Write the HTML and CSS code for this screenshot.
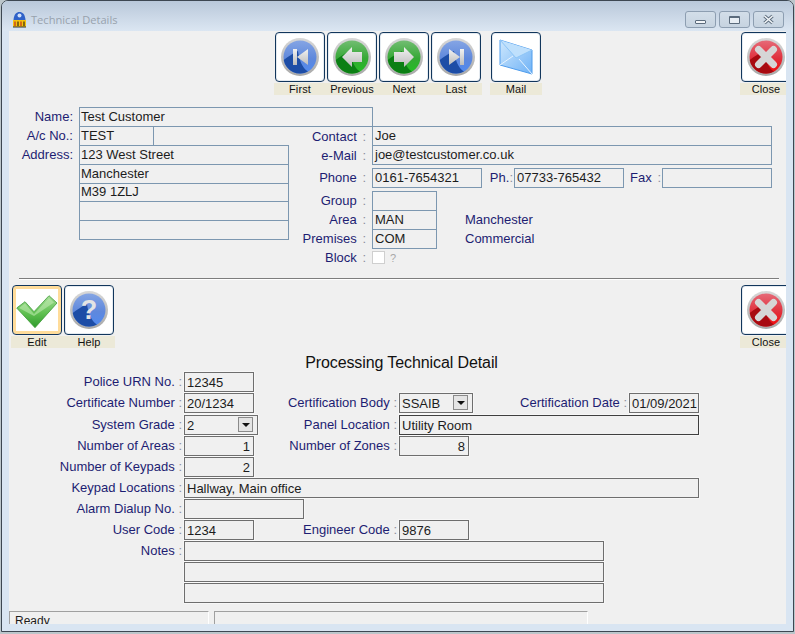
FILE: index.html
```html
<!DOCTYPE html>
<html lang="en">
<head>
    <meta charset="UTF-8">
    <meta name="viewport" content="width=device-width, initial-scale=1.0">
    <title>Technical Details</title>
    <link rel="stylesheet" href="styles.css">
</head>
<body>

    <!-- Shared gradients and icon parts -->
    <svg class="icon-defs" aria-hidden="true">
        <defs>
            <linearGradient id="ring" x1="0" y1="0" x2="0" y2="1">
                <stop offset="0" stop-color="#d8d8d8"/>
                <stop offset="1" stop-color="#a8a8a8"/>
            </linearGradient>
            <linearGradient id="glyph" x1="0" y1="0" x2="0" y2="1">
                <stop offset="0" stop-color="#f2f2f2"/>
                <stop offset="1" stop-color="#bcbcbc"/>
            </linearGradient>
            <linearGradient id="blueTop" x1="0" y1="0" x2="0" y2="1">
                <stop offset="0" stop-color="#85a5e4"/>
                <stop offset="0.55" stop-color="#5f88dc"/>
                <stop offset="1" stop-color="#4f8af2"/>
            </linearGradient>
            <linearGradient id="greenTop" x1="0" y1="0" x2="0" y2="1">
                <stop offset="0" stop-color="#72bd72"/>
                <stop offset="0.55" stop-color="#35a835"/>
                <stop offset="1" stop-color="#22c022"/>
            </linearGradient>
            <linearGradient id="redTop" x1="0" y1="0" x2="0" y2="1">
                <stop offset="0" stop-color="#e66a78"/>
                <stop offset="0.55" stop-color="#e0303c"/>
                <stop offset="1" stop-color="#f40808"/>
            </linearGradient>
            <linearGradient id="envelope" x1="0" y1="0" x2="1" y2="1">
                <stop offset="0" stop-color="#cfe8fd"/>
                <stop offset="1" stop-color="#6fb2f6"/>
            </linearGradient>
            <linearGradient id="tick" x1="0" y1="0" x2="0" y2="1">
                <stop offset="0" stop-color="#a4dc94"/>
                <stop offset="0.55" stop-color="#5fc050"/>
                <stop offset="1" stop-color="#2f9a2c"/>
            </linearGradient>
            <path id="swoosh" d="M8.7 28C13 25 18 21 23 19C24 27 27 36 33 39.5A16.5 16.5 0 0 1 8.7 28Z"/>
            <symbol id="disc-blue" viewBox="0 0 50 50">
                <circle cx="25" cy="25" r="19" fill="url(#ring)"/>
                <circle cx="25" cy="25" r="16.5" fill="url(#blueTop)"/>
                <use href="#swoosh" fill="#1d4da6"/>
            </symbol>
            <symbol id="disc-green" viewBox="0 0 50 50">
                <circle cx="25" cy="25" r="19" fill="url(#ring)"/>
                <circle cx="25" cy="25" r="16.5" fill="url(#greenTop)"/>
                <use href="#swoosh" fill="#0b7f14"/>
            </symbol>
            <symbol id="disc-red" viewBox="0 0 50 50">
                <circle cx="25" cy="25" r="19" fill="url(#ring)"/>
                <circle cx="25" cy="25" r="16.5" fill="url(#redTop)"/>
                <use href="#swoosh" fill="#a80a10"/>
            </symbol>
            <symbol id="icon-close" viewBox="0 0 50 50">
                <use href="#disc-red" width="50" height="50"/>
                <path d="M17.5 17.5L32.5 32.5M32.5 17.5L17.5 32.5" stroke="#d6d6d6" stroke-width="7" stroke-linecap="round"/>
            </symbol>
        </defs>
    </svg>

    <div class="window">

        <div class="titlebar">
            <svg class="app-icon" viewBox="0 0 15 17">
                <path d="M1.5 9C2 3 4.5 1 7.5 1S13 3 13.5 9Z" fill="#2f62c8"/>
                <circle cx="7.5" cy="4.5" r="2" fill="#cfe0fb"/>
                <rect x="1" y="9" width="13" height="7" fill="#f4c20d"/>
                <path d="M3 10.5V15M9 10.5V15" stroke="#c0301c" stroke-width="1.2"/>
                <path d="M6 10.5V15M12 10.5V15" stroke="#3a2a10" stroke-width="1.2"/>
                <path d="M1 16H14" stroke="#333"/>
            </svg>
            <span class="title-text">Technical Details</span>
            <div class="win-controls">
                <div class="win-btn"><span class="glyph-min"></span></div>
                <div class="win-btn"><span class="glyph-max"></span></div>
                <div class="win-btn">
                    <svg width="13" height="11" viewBox="0 0 13 11">
                        <path d="M2.5 2L10.5 9M10.5 2L2.5 9" stroke="#5b6b7c" stroke-width="3.4"/>
                        <path d="M2.5 2L10.5 9M10.5 2L2.5 9" stroke="#f2f5f8" stroke-width="1.6"/>
                    </svg>
                </div>
            </div>
        </div>

        <div class="client">

            <!-- Record navigation -->
            <div class="toolbar toolbar-top">
                <div class="tool">
                    <div class="tool-btn">
                        <svg viewBox="0 0 50 50">
                            <use href="#disc-blue" width="50" height="50"/>
                            <path d="M18 17H22V33H18ZM33 17V33L22 25Z" fill="url(#glyph)"/>
                        </svg>
                    </div>
                    <div class="tool-label">First</div>
                </div>
                <div class="tool">
                    <div class="tool-btn">
                        <svg viewBox="0 0 50 50">
                            <use href="#disc-green" width="50" height="50"/>
                            <path d="M15 25L25 15V20H35V30H25V35Z" fill="url(#glyph)"/>
                        </svg>
                    </div>
                    <div class="tool-label">Previous</div>
                </div>
                <div class="tool">
                    <div class="tool-btn">
                        <svg viewBox="0 0 50 50">
                            <use href="#disc-green" width="50" height="50"/>
                            <path d="M35 25L25 15V20H15V30H25V35Z" fill="url(#glyph)"/>
                        </svg>
                    </div>
                    <div class="tool-label">Next</div>
                </div>
                <div class="tool">
                    <div class="tool-btn">
                        <svg viewBox="0 0 50 50">
                            <use href="#disc-blue" width="50" height="50"/>
                            <path d="M29 17H33V33H29ZM18 17V33L29 25Z" fill="url(#glyph)"/>
                        </svg>
                    </div>
                    <div class="tool-label">Last</div>
                </div>
                <div class="tool tool-mail">
                    <div class="tool-btn">
                        <svg viewBox="0 0 50 50">
                            <path d="M9 8L41 18V42L9 33Z" fill="url(#envelope)" stroke="#4f9cec"/>
                            <path d="M9 8L25 26L41 18" fill="#bfe0fc" stroke="#8cc4f6"/>
                            <path d="M9 33L22 24M41 42L28 27" stroke="#e6f3fe" fill="none"/>
                        </svg>
                    </div>
                    <div class="tool-label">Mail</div>
                </div>
                <div class="tool tool-close-top">
                    <div class="tool-btn">
                        <svg viewBox="0 0 50 50"><use href="#icon-close" width="50" height="50"/></svg>
                    </div>
                    <div class="tool-label">Close</div>
                </div>
            </div>

            <!-- Customer details -->
            <div class="customer">
                <div class="c-row">
                    <div class="c-label">Name:</div>
                    <div class="fld fld-left w-name">Test Customer</div>
                </div>
                <div class="customer-body">
                    <div class="customer-left">
                        <div class="c-row">
                            <div class="c-label">A/c No.:</div>
                            <div class="fld fld-left w-acc">TEST</div>
                        </div>
                        <div class="c-row">
                            <div class="c-label">Address:</div>
                            <div class="fld fld-left w-addr">123 West Street</div>
                        </div>
                        <div class="c-row">
                            <div class="c-label"></div>
                            <div class="fld fld-left w-addr">Manchester</div>
                        </div>
                        <div class="c-row c-row-short">
                            <div class="c-label"></div>
                            <div class="fld fld-left w-addr">M39 1ZLJ</div>
                        </div>
                        <div class="c-row">
                            <div class="c-label"></div>
                            <div class="fld fld-left w-addr"></div>
                        </div>
                        <div class="c-row">
                            <div class="c-label"></div>
                            <div class="fld fld-left w-addr"></div>
                        </div>
                    </div>
                    <div class="customer-right">
                        <div class="c-row">
                            <div class="r-label r-label-low">Contact <span class="colon">:</span></div>
                            <div class="fld w-wide">Joe</div>
                        </div>
                        <div class="c-row">
                            <div class="r-label r-label-low">e-Mail <span class="colon">:</span></div>
                            <div class="fld w-wide">joe@testcustomer.co.uk</div>
                        </div>
                        <div class="c-row phone-row">
                            <div class="r-label">Phone <span class="colon">:</span></div>
                            <div class="fld w-phone">0161-7654321</div>
                            <div class="ph-label">Ph.<span class="colon">:</span></div>
                            <div class="fld w-phone">07733-765432</div>
                            <div class="fax-label">Fax <span class="colon">:</span></div>
                            <div class="fld w-phone"></div>
                        </div>
                        <div class="c-row group-row">
                            <div class="r-label">Group <span class="colon">:</span></div>
                            <div class="fld w-code"></div>
                        </div>
                        <div class="c-row">
                            <div class="r-label">Area <span class="colon">:</span></div>
                            <div class="fld w-code">MAN</div>
                            <div class="lookup">Manchester</div>
                        </div>
                        <div class="c-row">
                            <div class="r-label">Premises <span class="colon">:</span></div>
                            <div class="fld w-code">COM</div>
                            <div class="lookup">Commercial</div>
                        </div>
                        <div class="c-row">
                            <div class="r-label">Block <span class="colon">:</span></div>
                            <div class="check"></div>
                            <div class="check-mark">?</div>
                        </div>
                    </div>
                </div>
            </div>

            <div class="divider"></div>

            <div class="toolbar toolbar-edit">
                <div class="tool">
                    <div class="tool-btn tool-btn-focus">
                        <svg viewBox="0 0 50 50">
                            <path d="M4.7 23L13 16.7L22 26.7L37 10.7L45 18L23 42.7Z" fill="url(#tick)" stroke="#3f9c38" stroke-width="0.8"/>
                            <path d="M7 23L13 18.5L22 29L37 13L42 17.5L22 31Z" fill="#c2ecb4" opacity="0.55"/>
                        </svg>
                    </div>
                    <div class="tool-label">Edit</div>
                </div>
                <div class="tool">
                    <div class="tool-btn">
                        <svg viewBox="0 0 50 50">
                            <use href="#disc-blue" width="50" height="50"/>
                            <text class="help-mark" x="25" y="34" text-anchor="middle">?</text>
                        </svg>
                    </div>
                    <div class="tool-label">Help</div>
                </div>
                <div class="tool tool-close-edit">
                    <div class="tool-btn">
                        <svg viewBox="0 0 50 50"><use href="#icon-close" width="50" height="50"/></svg>
                    </div>
                    <div class="tool-label">Close</div>
                </div>
            </div>

            <h2 class="section-title">Processing Technical Detail</h2>

            <!-- Technical detail form -->
            <div class="tech-form">
                <div class="t-row">
                    <div class="t-label">Police URN No. <span class="colon">:</span></div>
                    <div class="box w-70">12345</div>
                </div>
                <div class="t-row">
                    <div class="t-label">Certificate Number <span class="colon">:</span></div>
                    <div class="box w-70">20/1234</div>
                    <div class="t-label w-gap">Certification Body <span class="colon">:</span></div>
                    <div class="box select w-74">SSAIB<span class="drop"></span></div>
                    <div class="t-label w-date">Certification Date <span class="colon">:</span></div>
                    <div class="box w-70">01/09/2021</div>
                </div>
                <div class="t-row row-grade">
                    <div class="t-label">System Grade <span class="colon">:</span></div>
                    <div class="box select w-74">2<span class="drop"></span></div>
                    <div class="t-label w-gap-short">Panel Location <span class="colon">:</span></div>
                    <div class="box box-dark w-300">Utility Room</div>
                </div>
                <div class="t-row">
                    <div class="t-label">Number of Areas <span class="colon">:</span></div>
                    <div class="box num w-70">1</div>
                    <div class="t-label w-gap">Number of Zones <span class="colon">:</span></div>
                    <div class="box num w-70">8</div>
                </div>
                <div class="t-row">
                    <div class="t-label">Number of Keypads <span class="colon">:</span></div>
                    <div class="box num w-70">2</div>
                </div>
                <div class="t-row">
                    <div class="t-label">Keypad Locations <span class="colon">:</span></div>
                    <div class="box w-515">Hallway, Main office</div>
                </div>
                <div class="t-row">
                    <div class="t-label">Alarm Dialup No. <span class="colon">:</span></div>
                    <div class="box w-120"></div>
                </div>
                <div class="t-row">
                    <div class="t-label">User Code <span class="colon">:</span></div>
                    <div class="box w-70">1234</div>
                    <div class="t-label w-gap">Engineer Code <span class="colon">:</span></div>
                    <div class="box w-70">9876</div>
                </div>
                <div class="t-row">
                    <div class="t-label">Notes <span class="colon">:</span></div>
                    <div class="box w-420"></div>
                </div>
                <div class="t-row">
                    <div class="t-label"></div>
                    <div class="box w-420"></div>
                </div>
                <div class="t-row">
                    <div class="t-label"></div>
                    <div class="box w-420"></div>
                </div>
            </div>

            <div class="statusbar">
                <div class="status-cell status-main">Ready</div>
                <div class="status-cell status-rest"></div>
            </div>

        </div>
    </div>

</body>
</html>
```

FILE: styles.css
```css
body {
    margin: 0;
    background-color: #bcc6cb;
    font-family: "Liberation Sans", Arial, sans-serif;
    font-size: 13px;
    color: #1c1c1c;
    height: 634px;
    overflow: hidden;
}

.icon-defs {
    position: absolute;
    width: 0;
    height: 0;
}

/* Window frame */
.window {
    box-sizing: border-box;
    width: 793px;
    height: 632px;
    margin-left: 1px;
    border: 1px solid #3d4752;
    border-radius: 7px 7px 0 0;
    background-color: #d9e5f2;
    padding: 0 7px;
}

.titlebar {
    height: 30px;
    margin: 0 -7px;
    padding: 0 9px 0 10px;
    display: flex;
    align-items: center;
    background: linear-gradient(#b9c8da, #dbe6f2);
    border-radius: 6px 6px 0 0;
}

.app-icon {
    width: 15px;
    height: 17px;
    flex: none;
    margin-top: 6px;
}

.title-text {
    margin: 6px 0 0 4px;
    font-family: "Open Sans", sans-serif;
    font-size: 11.1px;
    color: #98a2ad;
}

.win-controls {
    margin-left: auto;
    margin-top: 7px;
    display: flex;
    gap: 3px;
}

.win-btn {
    box-sizing: border-box;
    width: 31px;
    height: 17px;
    border: 1px solid #8d9eb1;
    border-radius: 3px;
    background: linear-gradient(#d3dee9, #c6d3e0);
    display: flex;
    align-items: center;
    justify-content: center;
}

.glyph-min {
    width: 9px;
    height: 2px;
    margin-top: 4px;
    border: 1px solid #5b6b7c;
    border-radius: 1px;
    background-color: #f2f5f8;
}

.glyph-max {
    width: 9px;
    height: 5px;
    border: 1px solid #5b6b7c;
    border-top-width: 2px;
    border-radius: 1px;
    background-color: #e8eef4;
}

/* Client area; the Close buttons run off its right edge */
.client {
    width: 777px;
    height: 593px;
    overflow: hidden;
    background-color: #f0f0f0;
}

.toolbar {
    display: flex;
}

.toolbar-top {
    padding: 1px 0 0 265px;
}

.toolbar-edit {
    padding-left: 2px;
    margin-top: 6px;
}

.tool {
    width: 52px;
    flex: none;
}

.tool-mail {
    margin-left: 8px;
}

.tool-close-top {
    margin-left: 198px;
}

.tool-close-edit {
    margin-left: 625px;
}

.tool-btn {
    box-sizing: border-box;
    width: 50px;
    height: 50px;
    margin: 0 1px;
    border: 1px solid #12365c;
    border-radius: 4px;
    background-color: #fff;
    box-shadow: inset 0 0 0 1px #e4eaf0;
    overflow: hidden;
}

.tool-btn svg {
    display: block;
    width: 50px;
    height: 50px;
    margin: -1px;
}

.tool-btn-focus {
    box-shadow: inset 0 0 0 3px #ffdc9a;
}

.tool-label {
    height: 12px;
    margin-top: 1px;
    background-color: #ece9d8;
    font-size: 11px;
    line-height: 12px;
    letter-spacing: 0.1px;
    text-align: center;
    color: #111;
}

.help-mark {
    font-family: "Liberation Sans", sans-serif;
    font-size: 27px;
    font-weight: bold;
    fill: #e4e4e4;
}

.colon {
    color: #8c8c9c;
}

/* Customer block */
.customer {
    margin-top: 12px;
}

.customer-body {
    display: flex;
}

.customer-left {
    width: 280px;
    flex: none;
}

.c-row {
    height: 19px;
    display: flex;
    align-items: flex-start;
}

.c-row-short {
    height: 18px;
}

.c-row-short .fld {
    height: 19px;
    line-height: 16px;
}

.c-label {
    box-sizing: border-box;
    width: 70px;
    flex: none;
    padding-right: 6px;
    line-height: 19px;
    text-align: right;
    color: #1d1d72;
}

.r-label {
    box-sizing: border-box;
    width: 83px;
    flex: none;
    padding-right: 6px;
    line-height: 20px;
    text-align: right;
    color: #1d1d72;
}

.r-label-low {
    line-height: 22px;
}

.r-label .colon,
.fax-label .colon {
    margin-left: 2px;
}

.fld {
    box-sizing: border-box;
    height: 20px;
    flex: none;
    padding-left: 2px;
    border: 1px solid #7c97b0;
    line-height: 17px;
    white-space: nowrap;
    color: #1c1c1c;
}

.fld-left {
    padding-left: 1px;
}

.w-name { width: 294px; }
.w-acc { width: 75px; }
.w-addr { width: 210px; }
.w-wide { width: 400px; }
.w-phone { width: 110px; }
.w-code { width: 65px; }

.phone-row {
    margin-top: 4px;
}

.group-row {
    margin-top: 4px;
}

.ph-label {
    box-sizing: border-box;
    width: 32px;
    flex: none;
    padding-right: 1px;
    line-height: 20px;
    text-align: right;
    color: #1d1d72;
}

.fax-label {
    box-sizing: border-box;
    width: 38px;
    flex: none;
    padding-right: 1px;
    line-height: 20px;
    text-align: right;
    color: #1d1d72;
}

.lookup {
    margin-left: 28px;
    line-height: 20px;
    color: #1d1d72;
}

.check {
    box-sizing: border-box;
    width: 13px;
    height: 13px;
    margin-top: 3px;
    border: 1px solid #cfcfcf;
    background-color: #fff;
}

.check-mark {
    margin-left: 5px;
    font-size: 11px;
    line-height: 20px;
    color: #a8a8a8;
}

.divider {
    width: 760px;
    height: 1px;
    margin: 11px 0 0 10px;
    background-color: #7d7d7d;
    box-shadow: 0 1px 0 #fff;
}

.section-title {
    height: 19px;
    margin: 5px 0 0;
    padding-left: 8px;
    font-size: 16px;
    font-weight: normal;
    line-height: 20px;
    letter-spacing: -0.1px;
    text-align: center;
    color: #111;
}

/* Technical form */
.t-row {
    height: 21px;
    display: flex;
    align-items: flex-start;
}

.row-grade {
    margin-top: 1px;
}

.t-label {
    box-sizing: border-box;
    width: 175px;
    flex: none;
    padding-right: 2px;
    line-height: 19px;
    text-align: right;
    color: #1d1d72;
}

.w-gap { width: 145px; }
.w-gap-short { width: 141px; }
.w-date { width: 156px; }

.box {
    box-sizing: border-box;
    height: 20px;
    flex: none;
    padding: 0 2px;
    border: 1px solid #6e6e6e;
    box-shadow: 0 0 0 0.5px #fff;
    line-height: 19px;
    white-space: nowrap;
    color: #1c1c1c;
}

.box-dark {
    border-color: #3f3f3f;
}

.num {
    padding-right: 3px;
    text-align: right;
}

.select {
    display: flex;
    justify-content: space-between;
    padding-right: 4px;
}

.drop {
    box-sizing: border-box;
    width: 15px;
    height: 15px;
    margin-top: 1px;
    border: 1px solid #8a8a8a;
    background-color: #e4e4e4;
    display: flex;
    align-items: center;
    justify-content: center;
}

.drop::after {
    content: "";
    margin-top: 1px;
    border-left: 4px solid transparent;
    border-right: 4px solid transparent;
    border-top: 4px solid #111;
}

.w-70 { width: 70px; }
.w-74 { width: 74px; }
.w-120 { width: 120px; }
.w-300 { width: 300px; }
.w-420 { width: 420px; }
.w-515 { width: 515px; }

.statusbar {
    display: flex;
    gap: 5px;
    margin-top: 7px;
}

.status-cell {
    box-sizing: border-box;
    height: 20px;
    flex: none;
    padding: 2px 0 0 5px;
    border-top: 1px solid #a0a0a0;
    border-left: 1px solid #a0a0a0;
    border-right: 1px solid #fff;
    font-size: 12px;
    line-height: 14px;
}

.status-main { width: 200px; }
.status-rest { width: 374px; }
```
